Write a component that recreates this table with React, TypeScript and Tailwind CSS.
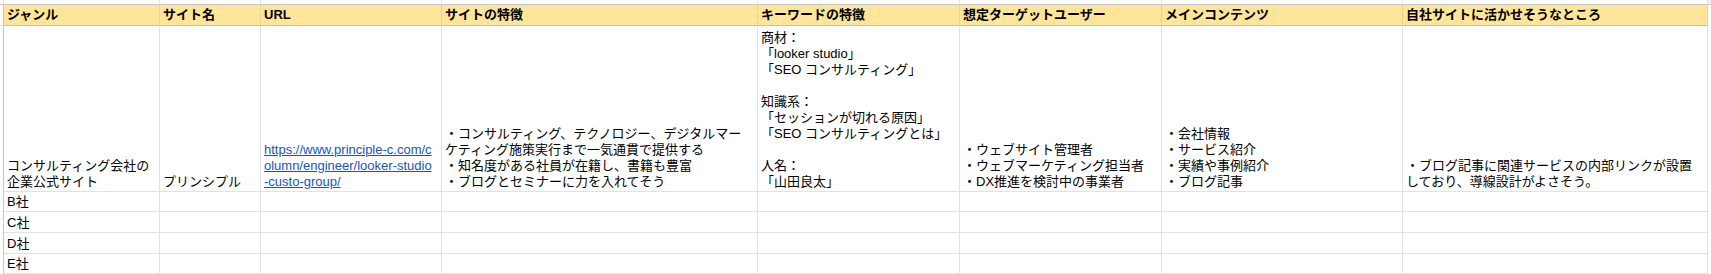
import React from "react";

const cols = [4, 156, 101, 181, 316, 202, 202, 241, 305, 3];
const rowsH = [5, 21, 166, 20, 21, 21, 20];

const headers = [
  "ジャンル",
  "サイト名",
  "URL",
  "サイトの特徴",
  "キーワードの特徴",
  "想定ターゲットユーザー",
  "メインコンテンツ",
  "自社サイトに活かせそうなところ",
];

const mainRow: string[] = [
  "コンサルティング会社の\n企業公式サイト",
  "プリンシプル",
  "",
  "・コンサルティング、テクノロジー、デジタルマー\nケティング施策実行まで一気通貫で提供する\n・知名度がある社員が在籍し、書籍も豊富\n・ブログとセミナーに力を入れてそう",
  "商材：\n「looker studio」\n「SEO コンサルティング」\n\n知識系：\n「セッションが切れる原因」\n「SEO コンサルティングとは」\n\n人名：\n「山田良太」",
  "・ウェブサイト管理者\n・ウェブマーケティング担当者\n・DX推進を検討中の事業者",
  "・会社情報\n・サービス紹介\n・実績や事例紹介\n・ブログ記事",
  "・ブログ記事に関連サービスの内部リンクが設置\nしており、導線設計がよさそう。",
];

const font = {
  fontFamily: '"Liberation Sans", Arial, "Noto Sans CJK JP", sans-serif',
};

export default function App() {
  const gridStyle: React.CSSProperties = {
    gridTemplateColumns: cols.map((c) => `${c}px`).join(" "),
    gridTemplateRows: rowsH.map((r) => `${r}px`).join(" "),
    ...font,
  };

  const cells: React.ReactNode[] = [];

  // top strip
  cols.forEach((_, i) => {
    cells.push(
      <div
        key={`t${i}`}
        className={`border-b border-b-[#c6c6c6] ${i < 9 ? "border-r border-r-[#e2e2e2]" : "bg-[#eef1f6]"}`}
      />
    );
  });

  // header row
  cols.forEach((_, i) => {
    if (i === 0) {
      cells.push(<div key={`h${i}`} className="border-r border-r-[#c6c6c6] border-b border-b-[#e2e2e2]" />);
    } else if (i === 9) {
      cells.push(<div key={`h${i}`} className="bg-white" />);
    } else {
      cells.push(
        <div
          key={`h${i}`}
          className="bg-[#ffe599] border-r border-r-[#ecd48a] border-b border-b-[#dcc172] flex items-center px-[3px] text-[13px] leading-[16px] font-bold text-black whitespace-nowrap overflow-hidden"
        >
          {headers[i - 1]}
        </div>
      );
    }
  });

  // main row
  cols.forEach((_, i) => {
    if (i === 0) {
      cells.push(<div key={`m${i}`} className="border-r border-r-[#c6c6c6]" />);
    } else if (i === 9) {
      cells.push(<div key={`m${i}`} className="bg-white" />);
    } else if (i === 3) {
      cells.push(
        <div
          key={`m${i}`}
          className="border-r border-b border-[#e2e2e2] flex items-end px-[3px] pb-[1px] text-[13px] leading-[16px] overflow-hidden"
        >
          <span className="text-[#1155cc] underline whitespace-pre">
            {"https://www.principle-c.com/c\nolumn/engineer/looker-studio\n-custo-group/"}
          </span>
        </div>
      );
    } else {
      cells.push(
        <div
          key={`m${i}`}
          className="border-r border-b border-[#e2e2e2] flex items-end px-[3px] pb-[1px] text-[13px] leading-[16px] text-black whitespace-pre overflow-hidden"
        >
          <span>{mainRow[i - 1]}</span>
        </div>
      );
    }
  });

  // other rows
  ["B社", "C社", "D社", "E社"].forEach((label, r) => {
    cols.forEach((_, i) => {
      if (i === 0) {
        cells.push(<div key={`r${r}-${i}`} className="border-r border-r-[#c6c6c6]" />);
      } else if (i === 9) {
        cells.push(<div key={`r${r}-${i}`} className="bg-white" />);
      } else {
        cells.push(
          <div
            key={`r${r}-${i}`}
            className="border-r border-b border-[#e2e2e2] flex items-end px-[3px] pb-[1px] text-[13px] leading-[16px] text-black whitespace-nowrap overflow-hidden"
          >
            {i === 1 ? label : ""}
          </div>
        );
      }
    });
  });

  return (
    <div className="w-[1711px] h-[274px] bg-white overflow-hidden">
      <div className="grid" style={gridStyle}>
        {cells}
      </div>
    </div>
  );
}
